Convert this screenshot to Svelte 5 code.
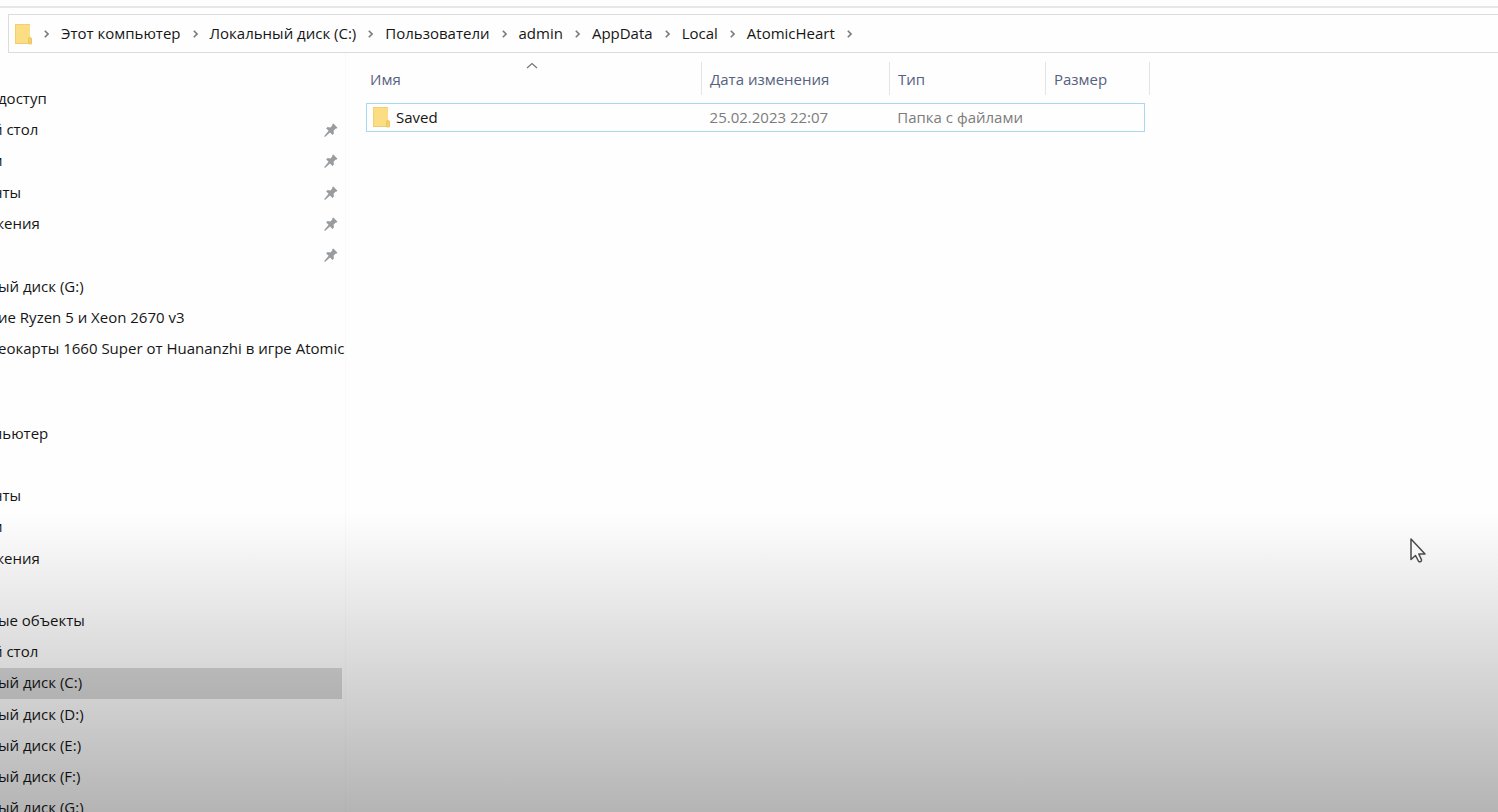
<script>
  const crumbs = ['Этот компьютер', 'Локальный диск (C:)', 'Пользователи', 'admin', 'AppData', 'Local', 'AtomicHeart'];
  const quick = [
    { label: 'доступ' },
    { label: 'й стол', pin: true, clipped: true },
    { label: 'и', pin: true, clipped: true },
    { label: 'нты', pin: true, clipped: true },
    { label: 'жения', pin: true, clipped: true },
    { label: '', pin: true },
    { label: 'ый диск (G:)' },
    { label: 'ие Ryzen 5 и Xeon 2670 v3' },
    { label: 'еокарты 1660 Super от Huananzhi в игре Atomic' }
  ];
  const computer = [
    { label: 'пьютер', clipped: true },
    { label: '' },
    { label: 'нты', clipped: true },
    { label: 'и', clipped: true },
    { label: 'жения', clipped: true },
    { label: '' },
    { label: 'ые объекты' },
    { label: 'й стол', clipped: true },
    { label: 'ый диск (C:)', active: true },
    { label: 'ый диск (D:)' },
    { label: 'ый диск (E:)' },
    { label: 'ый диск (F:)' },
    { label: 'ый диск (G:)' }
  ];
</script>

{#snippet folder()}
  <svg class="folder" viewBox="0 0 18 22" width="18" height="22" aria-hidden="true">
    <path d="M1 1h15v13l1.500 1V21H1z" fill="#fbdd83" />
    <path d="M1 1h15v1H2v19H1z" fill="#f3d06f" />
    <path d="M14.500 15.500c0-1.500 3-1.500 3 .5v5h-3z" fill="#f5d067" stroke="#e8bd52" stroke-width=".7" />
    <path d="M1 20h16.500v1H1z" fill="#eccb74" />
  </svg>
{/snippet}

{#snippet chevron()}
  <svg class="chevron" viewBox="0 0 5 10" width="5" height="10" aria-hidden="true">
    <path d="M.8 1.800L4 5 .8 8.200" fill="none" stroke="#7b7b7b" stroke-width="1.600" />
  </svg>
{/snippet}

{#snippet rows(items)}
  {#each items as item}
    <li class:active={item.active} class:clipped={item.clipped}>
      <a href="#nav">{item.label}</a>
      {#if item.pin}
        <svg viewBox="0 0 14 14" width="14" height="14" aria-hidden="true">
          <path d="M9.300.5l4.200 4.200-1.300 1.100-.8-.1-1.800 2.100.3 2.800-1.400 1.300-2.500-2.500L1.300 13.700l-1 .1.200-1.100 4.100-4.900-2.400-2.400 1.300-1.300 2.900.3L8.300 2.500l-.2-.9z" fill="#999c9f" />
        </svg>
      {/if}
    </li>
  {/each}
{/snippet}

<div class="window">
  <header>
    <nav class="address">
      {@render folder()}
      {@render chevron()}
      {#each crumbs as crumb}
        <a href="#path">{crumb}</a>
        {@render chevron()}
      {/each}
    </nav>
  </header>
  <div class="body">
    <aside>
      <ul class="quick">{@render rows(quick)}</ul>
      <ul class="computer">{@render rows(computer)}</ul>
    </aside>
    <main>
      <table>
        <thead>
          <tr>
            <th>Имя
              <svg class="sort" viewBox="0 0 12 7" width="12" height="7" aria-hidden="true">
                <path d="M1 6l5-4.500L11 6" fill="none" stroke="#777" stroke-width="1.300" />
              </svg>
            </th>
            <th>Дата изменения</th>
            <th>Тип</th>
            <th>Размер</th>
          </tr>
        </thead>
        <tbody>
          <tr>
            <td class="name">{@render folder()}Saved</td>
            <td>25.02.2023 22:07</td>
            <td>Папка с файлами</td>
            <td></td>
          </tr>
        </tbody>
      </table>
    </main>
  </div>
  <div class="shade"></div>
  <svg class="cursor" viewBox="0 0 18 28" width="18" height="28" aria-hidden="true">
    <path d="M2 2v20.500l4.500-4 3.200 6c1.200.9 3.200-.2 2.800-1.700l-2.700-5.800H16z" fill="#f7f7f7" stroke="#4a4a4a" stroke-width="1.500" stroke-linejoin="round" />
  </svg>
</div>

<style>
  :global(body) { margin: 0; }
  .window {
    position: relative;
    display: flex;
    flex-direction: column;
    height: 100vh;
    overflow: hidden;
    background: #fefefe;
    color: #161616;
    font: 15px/20px "Open Sans", "Noto Sans", sans-serif;
  }
  a { color: inherit; text-decoration: none; }
  header {
    margin-top: 6px;
    padding: 6px 0 0 8px;
    border-top: 2px solid #e6e6e6;
  }
  .address {
    display: flex;
    align-items: center;
    gap: 12px;
    height: 37px;
    padding-left: 5px;
    border: 1px solid #dcdcdc;
    border-right: 0;
  }
  .address a { padding-bottom: 2px; }
  svg { flex: none; display: block; }
  .body { display: flex; flex: 1; min-height: 0; }
  aside {
    width: 342px;
    padding: 30px 3px 0 0;
    overflow: hidden;
    border-right: 1px solid #f9f9f9;
  }
  ul {
    display: grid;
    grid-template-columns: minmax(0, 1fr);
    grid-auto-rows: 1fr;
    margin: 0;
    padding: 0;
    list-style: none;
  }
  .quick { height: 282px; margin-bottom: 53px; }
  .computer { height: 406px; }
  li {
    display: flex;
    align-items: center;
    justify-content: space-between;
    padding-right: 4px;
    white-space: nowrap;
  }
  li a { margin-left: -2px; padding-bottom: 2px; }
  .clipped a { margin-left: -7px; }
  .active { background: #d9d9d9; }
  main { flex: 1; padding: 9px 0 0 20px; }
  table { display: block; width: 784px; max-width: 100%; }
  thead, tbody { display: block; }
  tr {
    display: grid;
    grid-template-columns: 336fr 188fr 156fr 104fr;
    align-items: center;
  }
  th {
    position: relative;
    padding: 7px 8px 6px;
    border-right: 1px solid #e4e4e4;
    color: #56617f;
    font-weight: 400;
    text-align: left;
  }
  th:first-child { padding-left: 4px; }
  .sort { position: absolute; top: 0; left: 50%; margin-left: -8px; }
  tbody tr {
    grid-template-columns: 335fr 188fr 156fr 99fr;
    box-sizing: border-box;
    height: 29px;
    margin: 8px 5px 0 0;
    border: 1px solid #a9d8f2;
  }
  td { padding: 0 8px 2px; color: #7c7c7c; }
  .name {
    display: flex;
    align-items: center;
    gap: 6px;
    padding-left: 5px;
    color: #161616;
  }
  .shade {
    position: absolute;
    inset: 63% 0 0;
    background: linear-gradient(#0000, rgb(0 0 0 / 29%));
    pointer-events: none;
  }
  .cursor { position: absolute; left: 1409px; top: 537px; }
</style>
